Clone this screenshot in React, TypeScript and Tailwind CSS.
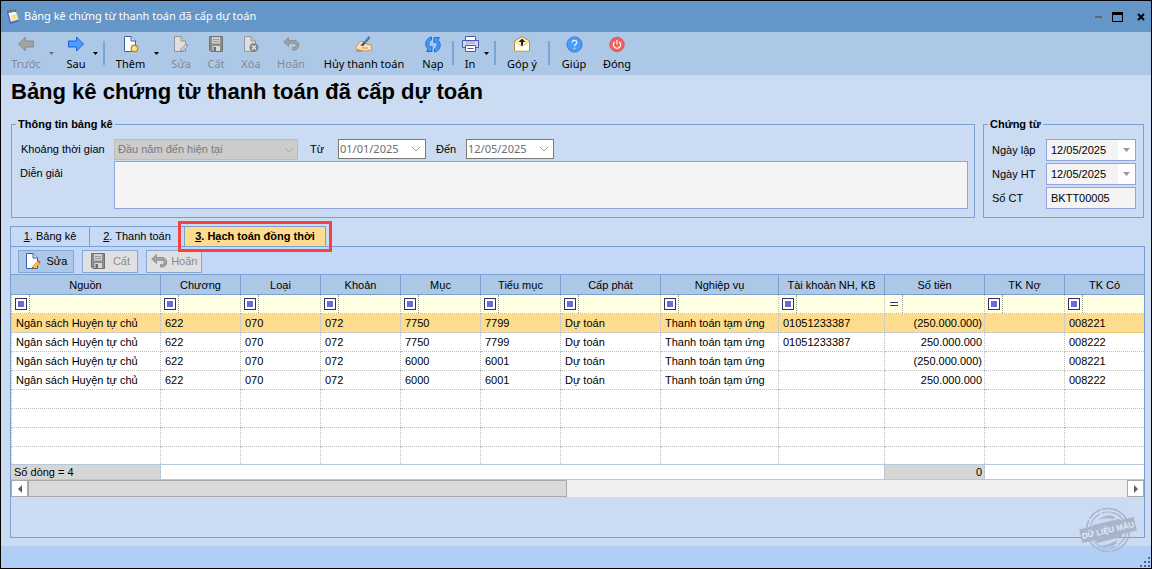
import { ReactNode } from "react"
import clsx from "clsx"

const columns = [
  { name: "Nguồn", width: "w-auto" },
  { name: "Chương", width: "w-[80px]" },
  { name: "Loại", width: "w-[80px]" },
  { name: "Khoản", width: "w-[80px]" },
  { name: "Mục", width: "w-[80px]" },
  { name: "Tiểu mục", width: "w-[80px]" },
  { name: "Cấp phát", width: "w-[100px]" },
  { name: "Nghiệp vụ", width: "w-[118px]" },
  { name: "Tài khoản NH, KB", width: "w-[106px]" },
  { name: "Số tiền", width: "w-[100px]" },
  { name: "TK Nợ", width: "w-[80px]" },
  { name: "TK Có", width: "w-[79px]" },
]

const AMOUNT = 9

const rows = [
  ["Ngân sách Huyện tự chủ", "622", "070", "072", "7750", "7799", "Dự toán", "Thanh toán tạm ứng", "01051233387", "(250.000.000)", "", "008221"],
  ["Ngân sách Huyện tự chủ", "622", "070", "072", "7750", "7799", "Dự toán", "Thanh toán tạm ứng", "01051233387", "250.000.000", "", "008222"],
  ["Ngân sách Huyện tự chủ", "622", "070", "072", "6000", "6001", "Dự toán", "Thanh toán tạm ứng", "", "(250.000.000)", "", "008221"],
  ["Ngân sách Huyện tự chủ", "622", "070", "072", "6000", "6001", "Dự toán", "Thanh toán tạm ứng", "", "250.000.000", "", "008222"],
]

function AppIcon() {
  return (
    <svg width="14" height="16" viewBox="0 0 14 16">
      <path d="M1 3 L10 1.5 L13 12 L4 15 Z" fill="#3f7fd0" />
      <path d="M2 4 L10 2.5 L12.5 10.5 L4.5 13 Z" fill="#f4f8ff" />
      <path d="M5 6 L11 5 L12.5 10.5 L6 12 Z" fill="#f3e48a" />
      <path d="M1 3.5 L4 15 L12.5 12.5 L12.3 11 L5 13 L2.5 4 Z" fill="#6a5fc8" />
      <path d="M2 4 V1 M4.5 3.5 V0.5 M7 3 V0.5 M9.5 3 V0.5" stroke="#5b5b70" />
    </svg>
  )
}

function ArrowIcon({ back }: { back?: boolean }) {
  return (
    <svg width="18" height="16" viewBox="0 0 18 16">
      <path
        d={back ? "M1.5 8 L8.5 1 V5 H16.5 V11 H8.5 V15 Z" : "M16.5 8 L9.5 1 V5 H1.5 V11 H9.5 V15 Z"}
        fill={back ? "#a2a2a2" : "#4f9bff"}
        stroke={back ? "#8b8b8b" : "#1763d6"}
      />
    </svg>
  )
}

function AddIcon() {
  return (
    <svg width="16" height="17" viewBox="0 0 16 17">
      <path d="M1.5 0.5 H8 L12.5 5 V15.5 H1.5 Z" fill="#fff" stroke="#3a5fae" />
      <path d="M8 0.5 V5 H12.5" fill="#cfe0ff" stroke="#3a5fae" />
      <circle cx="11.5" cy="12.5" r="3.2" fill="#ffe680" stroke="#b8902c" strokeWidth="1.4" />
    </svg>
  )
}

function EditIcon({ color }: { color?: boolean }) {
  return (
    <svg width="16" height="17" viewBox="0 0 16 17">
      <path d="M1.5 0.5 H8 L12.5 5 V15.5 H1.5 Z" fill={color ? "#fff" : "#dedede"} stroke={color ? "#3a5fae" : "#979797"} />
      <path d="M8 0.5 V5 H12.5" fill={color ? "#cfe0ff" : "#c4c4c4"} stroke={color ? "#3a5fae" : "#979797"} />
      <path d="M7.5 15.5 L8 13 L12.5 8.5 L14.5 10.5 L10 15 Z" fill={color ? "#f6c75a" : "#cccccc"} stroke={color ? "#c98a2c" : "#8f8f8f"} strokeWidth="0.8" />
      <path d="M12.5 8.5 L13.7 7.3 L15.7 9.3 L14.5 10.5 Z" fill={color ? "#e0523a" : "#a0a0a0"} />
      <path d="M7 16 L7.6 14 L9 15.4 Z" fill={color ? "#333" : "#888"} />
    </svg>
  )
}

function SaveIcon() {
  return (
    <svg width="16" height="16" viewBox="0 0 16 16">
      <path d="M1.5 0.5 H14.5 V15.5 H3 L1.5 14 Z" fill="#8c8c8c" stroke="#707070" />
      <path d="M4 1 H12 V7.5 H4 Z" fill="#cfcfcf" />
      <path d="M5 3.5 H11 M5 5.5 H11" stroke="#9c9c9c" />
      <path d="M4.5 10 H12 V15 H4.5 Z" fill="#d8d8d8" />
      <path d="M5.5 11 H8 V15 H5.5 Z" fill="#6e6e6e" />
    </svg>
  )
}

function DeleteIcon() {
  return (
    <svg width="16" height="17" viewBox="0 0 16 17">
      <path d="M1.5 0.5 H8 L12.5 5 V15.5 H1.5 Z" fill="#dedede" stroke="#979797" />
      <path d="M8 0.5 V5 H12.5" fill="#c4c4c4" stroke="#979797" />
      <circle cx="11" cy="11.5" r="4.5" fill="#848484" />
      <path d="M9 9.5 L13 13.5 M13 9.5 L9 13.5" stroke="#e6e6e6" strokeWidth="1.4" />
    </svg>
  )
}

function UndoIcon() {
  return (
    <svg width="17" height="16" viewBox="0 0 17 16">
      <path
        d="M0.7 6 L5.5 1.5 V4.5 H11 C17.3 4.5 17.3 14 11 14 H9.5 V11.5 H11 C13.8 11.5 13.8 7.3 11 7.3 H5.5 V10.5 Z"
        fill="#a2a2a2"
        stroke="#868686"
        strokeWidth="0.8"
      />
    </svg>
  )
}

function SignIcon() {
  return (
    <svg width="18" height="16" viewBox="0 0 18 16">
      <path d="M1 11 L5 5.5 L9 5.5 L11 8 L16 9 L17 14 L12 15 L6 14.5 L1 13 Z" fill="#fbe0b4" stroke="#c98443" strokeWidth="0.8" />
      <path d="M5 9 L9 10 M7 12 H13" stroke="#c98443" strokeWidth="0.8" />
      <path d="M7 9.5 L14.5 1" stroke="#2e4c86" strokeWidth="2.2" />
      <path d="M9 6.8 L14 1.3" stroke="#a8c8f0" strokeWidth="0.8" />
      <path d="M1 15 H7" stroke="#b8702c" />
    </svg>
  )
}

function ReloadIcon() {
  return (
    <svg width="16" height="17" viewBox="0 0 16 17">
      <path d="M6.5 1 C0.5 2 -1 9.5 3 13 L1.5 15.5 H7 V10 L5 11.5 C2.8 9 4 5 6.5 4 Z" fill="#4c9af8" stroke="#1763d6" strokeWidth="0.9" />
      <path d="M9.5 16 C15.5 15 17 7.5 13 4 L14.5 1.5 H9 V7 L11 5.5 C13.2 8 12 12 9.5 13 Z" fill="#4c9af8" stroke="#1763d6" strokeWidth="0.9" />
    </svg>
  )
}

function PrintIcon() {
  return (
    <svg width="17" height="16" viewBox="0 0 17 16">
      <path d="M3.5 0.5 H13.5 V5 H3.5 Z" fill="#fff" stroke="#4b58a8" />
      <path d="M0.5 4.5 H16.5 V11.5 H0.5 Z" fill="#d4daf6" stroke="#4b58a8" />
      <path d="M4 5 H13 V8 H4 Z" fill="#b4bdea" />
      <path d="M3.5 9.5 H13.5 V15.5 H3.5 Z" fill="#fff" stroke="#4b58a8" />
      <path d="M5.5 12.5 H11.5" stroke="#4b58a8" />
    </svg>
  )
}

function MailIcon() {
  return (
    <svg width="18" height="16" viewBox="0 0 18 16">
      <path d="M1.5 5 L9 0.5 L16.5 5 V15 H1.5 Z" fill="#fff4c4" stroke="#b8902c" />
      <path d="M2 5.5 L9 10.5 L16 5.5 V14.5 H2 Z" fill="#fffdf4" />
      <path d="M2 5.5 L9 10.5 L16 5.5" fill="none" stroke="#e3c878" />
      <path d="M9 2.5 L12.5 6 H10 V9.5 H8 V6 H5.5 Z" fill="#222" />
    </svg>
  )
}

function HelpIcon() {
  return (
    <svg width="17" height="17" viewBox="0 0 17 17">
      <circle cx="8.5" cy="8.5" r="7.6" fill="#4b9bfb" stroke="#2f7fe4" />
      <path d="M6.2 6.5 C6.2 3.6 10.8 3.6 10.8 6.4 C10.8 8.2 8.5 8.2 8.5 10.3 M8.5 11.7 V13" fill="none" stroke="#eaf4ff" strokeWidth="1.3" />
    </svg>
  )
}

function PowerIcon() {
  return (
    <svg width="16" height="17" viewBox="0 0 16 17">
      <circle cx="8" cy="8.5" r="7.2" fill="#f4605e" stroke="#e05252" />
      <path d="M5.6 6 A3.6 3.6 0 1 0 10.4 6 M8 4 V8.5" fill="none" stroke="#fff" strokeWidth="1.2" />
    </svg>
  )
}

function Tool({ icon, label, width, disabled }: { icon: ReactNode; label: string; width: string; disabled?: boolean }) {
  return (
    <button
      disabled={disabled}
      className={clsx("flex flex-col items-center whitespace-nowrap", width, disabled ? "text-[#808b98]" : "text-black")}
    >
      <span className="flex h-[18px] items-center">{icon}</span>
      <span className="mt-0.5 leading-[18px]">{label}</span>
    </button>
  )
}

function DropArrow({ label, disabled }: { label: string; disabled?: boolean }) {
  return (
    <button aria-label={label} disabled={disabled} className="flex w-2 justify-center pt-[17px]">
      <svg width="5" height="3" viewBox="0 0 5 3">
        <path d="M0 0 H5 L2.5 3 Z" fill={disabled ? "#707070" : "#000"} />
      </svg>
    </button>
  )
}

function Separator() {
  return (
    <div className="flex w-[10px] justify-center pt-1.5">
      <div className="h-6 w-0.5 bg-[#7ba5d8]" />
    </div>
  )
}

function Chevron() {
  return (
    <svg width="10" height="6" viewBox="0 0 10 6" className="pointer-events-none shrink-0">
      <path d="M1 1 L5 5 L9 1" fill="none" stroke="#a6a6a6" />
    </svg>
  )
}

function PeriodDate({ id, value }: { id: string; value: string }) {
  return (
    <div className="flex h-5 w-[88px] items-center border border-[#7a7a7a] bg-white pr-1">
      <input id={id} disabled defaultValue={value} className="w-0 flex-1 pl-px font-['Noto_Sans'] text-[#6d6d6d]" />
      <Chevron />
    </div>
  )
}

function VoucherDate({ id, value }: { id: string; value: string }) {
  return (
    <div className="flex h-[22px] flex-1 items-center border border-[#8fa3de] bg-white">
      <input id={id} readOnly defaultValue={value} className="h-5 w-0 flex-1 bg-[#f4f4f4] pl-1" />
      <button aria-label="Chọn ngày" className="flex w-[17px] justify-center">
        <svg width="7" height="4" viewBox="0 0 7 4">
          <path d="M0 0 H7 L3.5 4 Z" fill="#9a9a9a" />
        </svg>
      </button>
    </div>
  )
}

function FilterCell({ equals }: { equals?: boolean }) {
  return (
    <div className="flex h-[18px] items-center">
      <button aria-label="Điều kiện lọc" className="flex h-full w-[18px] items-center justify-center border-r border-dotted border-[#9a9a9a]">
        {equals ? (
          <span className="h-1 w-2 border-y border-[#33336b]" />
        ) : (
          <span className="flex size-3 items-center justify-center border border-[#33336b] bg-white">
            <span className="size-1.5 bg-[#6a6ad2]" />
          </span>
        )}
      </button>
    </div>
  )
}

function Stamp() {
  return (
    <svg width="60" height="48" viewBox="0 0 60 48" className="pointer-events-none absolute right-3 bottom-3.5">
      <g fill="none" stroke="#a9b5cc">
        <circle cx="29" cy="24" r="21.5" strokeWidth="1.6" strokeDasharray="30 2 14 1" />
        <circle cx="29" cy="24" r="18" strokeWidth="1.2" strokeDasharray="18 2 8 1" />
      </g>
      <path d="M19 14 Q28 7 36 11 L34 13 Q26 11 19 14 Z M14 19 L40 13 L43 15 L14 21 Z" fill="#a9b5cc" />
      <path d="M16 34 L44 27 L42 31 L18 37 Z M21 39 Q30 40 38 34 L37 38 Q30 43 21 39 Z" fill="#a9b5cc" />
      <g transform="rotate(-13 29 24)">
        <rect x="1" y="17" width="56" height="14" fill="#a9b5cc" />
        <text x="29" y="27" textAnchor="middle" fill="#e4eaf5" className="font-['Liberation_Sans'] text-[8px] font-bold">
          DỮ LIỆU MẪU
        </text>
      </g>
    </svg>
  )
}

function GridButton({ icon, label, disabled }: { icon: ReactNode; label: string; disabled?: boolean }) {
  return (
    <button
      disabled={disabled}
      className={clsx(
        "flex h-[23px] w-14 items-center justify-evenly border border-[#86a8d4]",
        disabled ? "bg-[#e0e0e0] text-[#8c8c8c]" : "bg-[#adc8e6] text-black"
      )}
    >
      {icon}
      {label}
    </button>
  )
}

export default function App() {
  return (
    <div className="relative flex min-h-screen flex-col border border-black bg-[#cbdbf1] font-['Liberation_Sans',sans-serif] text-[11px] text-black">
      <header className="flex h-[31px] items-center gap-1 bg-[#6596c8] pl-[5px] font-['Noto_Sans'] text-white">
        <AppIcon />
        <span className="flex-1">Bảng kê chứng từ thanh toán đã cấp dự toán</span>
        <div className="flex items-center gap-2.5 pr-1.5">
          <button aria-label="Thu nhỏ" className="flex w-2 justify-center">
            <span className="h-0.5 w-[7px] bg-[#666]" />
          </button>
          <button aria-label="Phóng to" className="h-[10px] w-[11px] border border-t-[3px] border-black" />
          <button aria-label="Đóng cửa sổ" className="ml-1">
            <svg width="8" height="8" viewBox="0 0 8 8">
              <path d="M1 1 L7 7 M7 1 L1 7" stroke="#000" strokeWidth="2" />
            </svg>
          </button>
        </div>
      </header>

      <nav className="flex h-[43px] items-start bg-[#adc8e6] pt-[3px] pl-1 font-['Noto_Sans']">
        <Tool icon={<ArrowIcon back />} label="Trước" width="w-[42px]" disabled />
        <DropArrow label="Các trang trước" disabled />
        <Tool icon={<ArrowIcon />} label="Sau" width="ml-1.5 w-[30px]" />
        <DropArrow label="Các trang sau" />
        <Separator />
        <Tool icon={<AddIcon />} label="Thêm" width="w-[43px]" />
        <DropArrow label="Tùy chọn thêm" />
        <Tool icon={<EditIcon />} label="Sửa" width="w-[42px]" disabled />
        <Tool icon={<SaveIcon />} label="Cất" width="w-[28px]" disabled />
        <Tool icon={<DeleteIcon />} label="Xóa" width="w-[42px]" disabled />
        <Tool icon={<UndoIcon />} label="Hoãn" width="w-[38px]" disabled />
        <Tool icon={<SignIcon />} label="Hủy thanh toán" width="w-[108px]" />
        <Tool icon={<ReloadIcon />} label="Nạp" width="w-[30px]" />
        <Separator />
        <Tool icon={<PrintIcon />} label="In" width="w-[24px]" />
        <DropArrow label="Tùy chọn in" />
        <Separator />
        <Tool icon={<MailIcon />} label="Góp ý" width="w-[44px]" />
        <Separator />
        <Tool icon={<HelpIcon />} label="Giúp" width="w-[40px]" />
        <Tool icon={<PowerIcon />} label="Đóng" width="w-[46px]" />
      </nav>

      <main className="flex flex-1 flex-col pr-1.5 pb-2 pl-[9px]">
        <h1 className="h-[42px] pt-1 pl-px text-[22px] leading-[26px] font-bold">Bảng kê chứng từ thanh toán đã cấp dự toán</h1>

        <div className="flex gap-2 pr-px pl-px">
          <fieldset className="min-w-0 flex-1 border border-[#7b9fd0]">
            <legend className="ml-1 px-0.5 leading-[14px] font-bold">Thông tin bảng kê</legend>
            <div className="pt-2 pr-1.5 pb-2 pl-2">
              <div className="flex h-[22px] items-start">
                <label htmlFor="period" className="w-[94px] pl-px leading-[20px]">
                  Khoảng thời gian
                </label>
                <div className="relative w-[184px]">
                  <select id="period" disabled className="h-[21px] w-full appearance-none border border-[#bcbcbc] bg-[#cccccc] pl-[3px] text-[#7a7a7a] opacity-100">
                    <option>Đầu năm đến hiện tại</option>
                  </select>
                  <span className="pointer-events-none absolute top-2 right-1">
                    <Chevron />
                  </span>
                </div>
                <label htmlFor="from" className="w-10 pl-3 leading-[20px]">
                  Từ
                </label>
                <PeriodDate id="from" value="01/01/2025" />
                <label htmlFor="to" className="w-10 pl-2.5 leading-[20px]">
                  Đến
                </label>
                <PeriodDate id="to" value="12/05/2025" />
              </div>
              <div className="flex items-start">
                <label htmlFor="note" className="w-[94px] leading-[24px]">
                  Diễn giải
                </label>
                <textarea id="note" readOnly className="h-12 flex-1 resize-none border border-[#8fa3de] bg-[#f4f4f4]" />
              </div>
            </div>
          </fieldset>

          <fieldset className="w-[161px] border border-[#7b9fd0]">
            <legend className="ml-1 px-0.5 leading-[14px] font-bold">Chứng từ</legend>
            <div className="flex flex-col gap-0.5 pt-2 pr-[7px] pl-2">
              <div className="flex items-center">
                <label htmlFor="created" className="w-[54px]">
                  Ngày lập
                </label>
                <VoucherDate id="created" value="12/05/2025" />
              </div>
              <div className="flex items-center">
                <label htmlFor="posted" className="w-[54px]">
                  Ngày HT
                </label>
                <VoucherDate id="posted" value="12/05/2025" />
              </div>
              <div className="flex items-center">
                <label htmlFor="number" className="w-[54px]">
                  Số CT
                </label>
                <input id="number" readOnly defaultValue="BKTT00005" className="h-[22px] w-0 flex-1 border border-[#8fa3de] bg-[#f4f4f4] pl-1" />
              </div>
            </div>
          </fieldset>
        </div>

        <div role="tablist" className="mt-2 flex h-5">
          <button role="tab" className="w-[79px] border-t border-l border-[#7b9fd0] bg-[#c6daf6]">
            <u>1</u>. Bảng kê
          </button>
          <button role="tab" className="w-[95px] border-t border-l border-[#7b9fd0] bg-[#c6daf6]">
            <u>2</u>. Thanh toán
          </button>
          <div className="relative w-[142px]">
            <button role="tab" aria-selected className="h-full w-full border border-b-0 border-[#7b9fd0] bg-[#fedc8e] font-bold">
              <u>3</u>. Hạch toán đồng thời
            </button>
            <div className="pointer-events-none absolute -inset-x-1.5 -top-[5px] -bottom-1.5 border-3 border-[#f84242]" />
          </div>
        </div>

        <section className="flex flex-1 flex-col border border-[#7b9fd0]">
          <div className="flex h-[27px] items-center gap-2 bg-[#c3d8f8] pt-px pl-[7px]">
            <GridButton icon={<EditIcon color />} label="Sửa" />
            <GridButton icon={<SaveIcon />} label="Cất" disabled />
            <GridButton icon={<UndoIcon />} label="Hoãn" disabled />
          </div>

          <table className="w-full table-fixed border-separate border-spacing-0 bg-white leading-[14px]">
            <colgroup>
              {columns.map((c) => (
                <col key={c.name} className={c.width} />
              ))}
            </colgroup>
            <thead>
              <tr className="h-[21px] bg-[#adc8e6]">
                {columns.map((c) => (
                  <th key={c.name} className="border-y border-r border-[#7b9fd0] p-0 font-normal whitespace-nowrap last:border-r-0">
                    {c.name}
                  </th>
                ))}
              </tr>
              <tr className="h-[19px] bg-[#ffffe1]">
                {columns.map((c, i) => (
                  <td key={c.name} className="border-r border-b border-dotted border-[#bdbdbd] p-0 first:border-l last:border-r-0">
                    <FilterCell equals={i === AMOUNT} />
                  </td>
                ))}
              </tr>
            </thead>
            <tbody>
              {rows.map((row, i) => (
                <tr key={i} className={clsx("h-[19px]", i === 0 && "bg-[#fedc8e]")}>
                  {row.map((cell, j) => (
                    <td
                      key={j}
                      className={clsx(
                        "border-r border-b border-dotted border-[#bdbdbd] py-0 whitespace-nowrap first:border-l last:border-r-0",
                        j === AMOUNT ? "pr-0.5 text-right" : "pl-1"
                      )}
                    >
                      {cell}
                    </td>
                  ))}
                </tr>
              ))}
              {[0, 1, 2, 3].map((i) => (
                <tr key={i} className="h-[19px] last:h-[17px]">
                  {columns.map((c) => (
                    <td
                      key={c.name}
                      className="border-r border-b border-dotted border-[#bdbdbd] p-0 first:border-l last:border-r-0 in-[tr:last-child]:border-b-0"
                    />
                  ))}
                </tr>
              ))}
            </tbody>
            <tfoot>
              <tr className="h-4">
                <td className="border-y border-r border-[#b5c8dc] bg-[#d6d6d6] py-0 pl-[3px]">Số dòng = 4</td>
                <td colSpan={8} className="border-y border-r border-[#b5c8dc] p-0" />
                <td className="border-y border-r border-[#b5c8dc] bg-[#d6d6d6] py-0 pr-0.5 text-right">0</td>
                <td colSpan={2} className="border-y border-[#b5c8dc] p-0" />
              </tr>
            </tfoot>
          </table>

          <div className="flex h-[17px] bg-[#efefef]">
            <button aria-label="Cuộn trái" className="flex w-[17px] items-center justify-center border border-[#a9a9a9] bg-white">
              <svg width="4" height="8" viewBox="0 0 4 8">
                <path d="M4 0 V8 L0 4 Z" fill="#606060" />
              </svg>
            </button>
            <div className="flex-1">
              <div className="h-full w-[49%] border border-[#a9a9a9] bg-[#d9d9d9]" />
            </div>
            <button aria-label="Cuộn phải" className="flex w-[17px] items-center justify-center border border-[#a9a9a9] bg-white">
              <svg width="4" height="8" viewBox="0 0 4 8">
                <path d="M0 0 V8 L4 4 Z" fill="#606060" />
              </svg>
            </button>
          </div>
        </section>
      </main>

      <footer className="flex h-[22px] items-end justify-end bg-[#b1cff5]">
        <svg width="11" height="11" viewBox="0 0 11 11">
          <path d="M8 0 h2 v2 h-2 Z M4 4 h2 v2 h-2 Z M8 4 h2 v2 h-2 Z M0 8 h2 v2 h-2 Z M4 8 h2 v2 h-2 Z M8 8 h2 v2 h-2 Z" fill="#4a6590" />
        </svg>
      </footer>
      <Stamp />
    </div>
  )
}
